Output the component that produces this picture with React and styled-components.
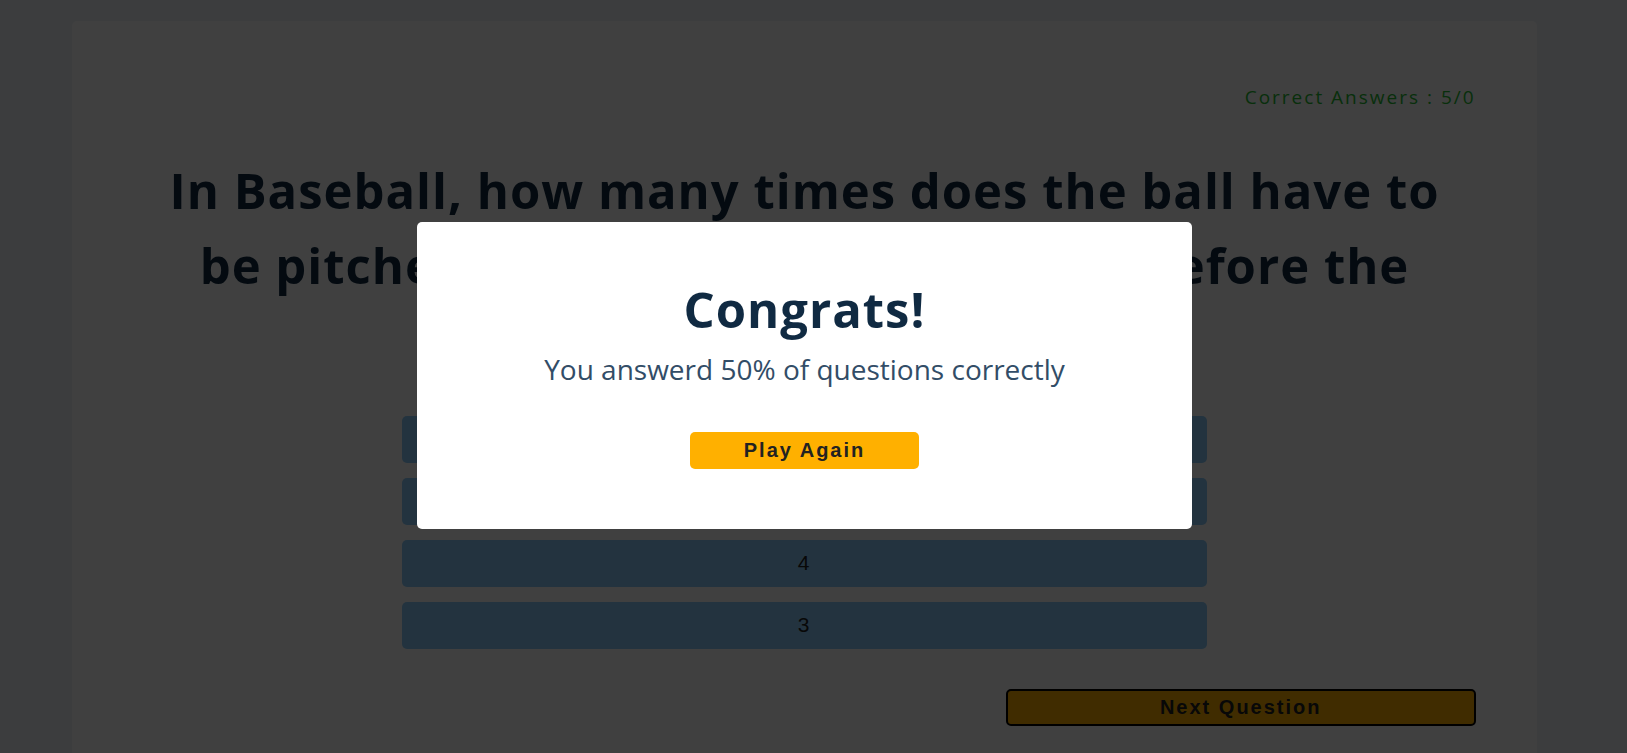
import React from "react";
import styled, { createGlobalStyle } from "styled-components";

const GlobalStyle = createGlobalStyle`
  *, *::before, *::after { box-sizing: border-box; }
  html { background: #f0f2f8; }
  body {
    margin: 0;
    color: #222;
    font-family: "Segoe UI", "Open Sans", "Noto Sans", sans-serif;
    font-size: 20px;
    overflow: hidden;
  }
  h2, p { margin: 0; }
`;

const Page = styled.main`
  min-height: 100vh;
  padding: 21px 18px 0 0;
`;

const QuizCard = styled.section`
  width: 91%;
  min-height: 100vh;
  margin: 0 auto;
  padding: 60px 61px;
  background: #fff;
  border-radius: 5px;
`;

const Score = styled.p`
  color: #25bb32;
  font-size: 19px;
  font-weight: 400;
  line-height: 32px;
  letter-spacing: 2px;
  text-align: right;
`;

const Title = styled.h2`
  color: #102a42;
  font-size: 49px;
  font-weight: 700;
  line-height: 75px;
  letter-spacing: 1px;
  text-align: center;
`;

const Question = styled.article`
  padding: 40px 20px 0;
`;

const Answers = styled.div`
  display: grid;
  gap: 15px;
  width: 60%;
  margin: 38px auto 40px;
`;

const Answer = styled.button`
  height: 47px;
  padding: 0 6px 2px;
  border: 0;
  border-radius: 5px;
  background: #8bcbf9;
  color: #222;
  font-family: Arial, "Liberation Sans", sans-serif;
  font-size: 21px;
  letter-spacing: 2px;
`;

const ActionButton = styled.button`
  display: block;
  width: 35%;
  height: 37px;
  margin: ${({ $align }) => ($align === "right" ? "0 0 0 auto" : "0 auto")};
  border: ${({ $focused }) => ($focused ? "2px solid #000" : "0")};
  border-radius: 5px;
  background: #ffb000;
  color: #222;
  font-family: Arial, "Liberation Sans", sans-serif;
  font-size: 20px;
  font-weight: 700;
  letter-spacing: 2px;
`;

const Overlay = styled.div`
  position: fixed;
  inset: 0;
  display: flex;
  align-items: center;
  justify-content: center;
  padding: 0 18px 2px 0;
  background: rgba(0, 0, 0, 0.75);
`;

const Modal = styled.div`
  width: 775px;
  max-width: 90%;
  padding: 50px 60px 60px;
  background: #fff;
  border-radius: 5px;
`;

const Result = styled.p`
  margin-bottom: 40px;
  color: #324d67;
  font-size: 28px;
  font-weight: 400;
  line-height: 45px;
  text-align: center;
`;

const answers = ["1", "2", "4", "3"];

export default function App() {
  return (
    <>
      <GlobalStyle />
      <Page>
        <QuizCard>
          <Score>Correct Answers : 5/0</Score>
          <Question>
            <Title>
              In Baseball, how many times does the ball have to be pitched
              outside of the strike zone before the batter is walked?
            </Title>
          </Question>
          <Answers>
            {answers.map((answer) => (
              <Answer key={answer} type="button">{answer}</Answer>
            ))}
          </Answers>
          <ActionButton type="button" $align="right" $focused>Next Question</ActionButton>
        </QuizCard>
      </Page>
      <Overlay>
        <Modal role="dialog" aria-modal="true" aria-labelledby="result-title">
          <Title id="result-title">Congrats!</Title>
          <Result>You answerd 50% of questions correctly</Result>
          <ActionButton type="button">Play Again</ActionButton>
        </Modal>
      </Overlay>
    </>
  );
}
